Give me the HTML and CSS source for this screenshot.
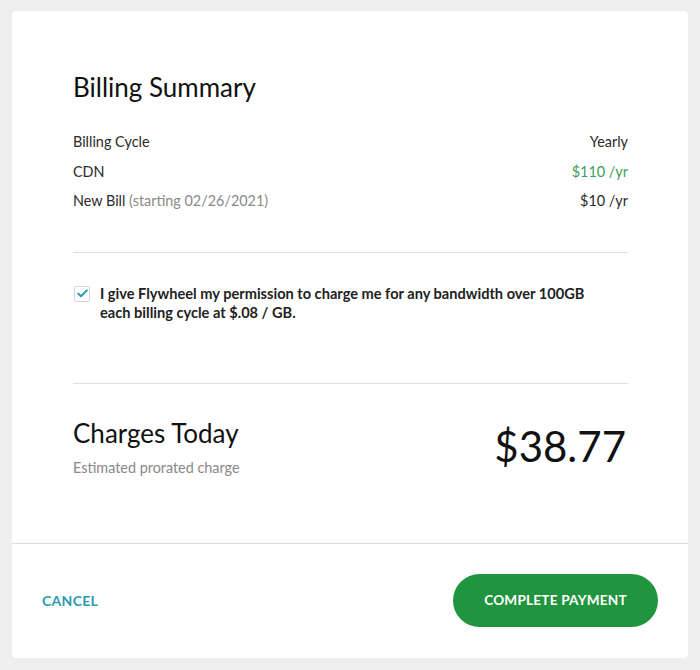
FILE: index.html
```html
<!DOCTYPE html>
<html lang="en">
<head>
<meta charset="utf-8">
<title>Billing Summary</title>
<link rel="stylesheet" href="styles.css">
</head>
<body>
<div class="card">
  <div class="content">
    <h1 class="title">Billing Summary</h1>
    <div class="rows">
      <div class="row"><span>Billing Cycle</span><span>Yearly</span></div>
      <div class="row"><span>CDN</span><span class="green">$110 /yr</span></div>
      <div class="row"><span>New Bill <span class="muted">(starting 02/26/2021)</span></span><span>$10 /yr</span></div>
    </div>
    <hr class="divider">
    <label class="consent">
      <span class="box"><svg width="11" height="9" viewBox="0 0 11 9"><path d="M1.2 4.6 L4 7.3 L9.8 1.4" fill="none" stroke="#2a9cb0" stroke-width="2" stroke-linecap="round" stroke-linejoin="round"/></svg></span>
      <span class="consent-text">I give Flywheel my permission to charge me for any bandwidth over 100GB each billing cycle at $.08 / GB.</span>
    </label>
    <hr class="divider divider-2">
    <div class="charges">
      <div>
        <h2 class="title">Charges Today</h2>
        <div class="sub">Estimated prorated charge</div>
      </div>
      <div class="amount">$38.77</div>
    </div>
  </div>
  <div class="footer">
    <a class="cancel" href="#">CANCEL</a>
    <button class="pay">COMPLETE PAYMENT</button>
  </div>
</div>
</body>
</html>
```
FILE: styles.css
```css
* { box-sizing: border-box; }
html, body { margin: 0; }
body {
  background: #efeeee;
  padding: 11px 12px 12px 12px;
  font-family: Lato, "Open Sans", sans-serif;
  color: #1b1b1b;
}
.card {
  background: #fff;
  border-radius: 4px;
  width: 676px;
  height: 647px;
  display: flex;
  flex-direction: column;
}
.content {
  flex: 1;
  padding: 62px 60px 0 61px;
}
.title {
  margin: 0;
  font-size: 26px;
  font-weight: 400;
  line-height: 29px;
  color: #111;
}
.rows { margin-top: 25px; }
.row {
  display: flex;
  justify-content: space-between;
  font-size: 14.4px;
  line-height: 29.5px;
  color: #2b2b2b;
}
.green { color: #3c9f5c; }
.muted { color: #8a8a8a; }
.divider {
  border: 0;
  border-top: 1px solid #dedede;
  margin: 36px 0 0 0;
}
.consent {
  display: flex;
  align-items: flex-start;
  gap: 10px;
  margin-top: 31px;
  padding-left: 1px;
}
.box {
  flex: none;
  width: 16px;
  height: 16px;
  border: 1px solid #d6d6d6;
  border-radius: 2px;
  display: flex;
  align-items: center;
  justify-content: center;
  margin-top: 2px;
}
.consent-text {
  font-size: 14.6px;
  font-weight: 700;
  line-height: 19px;
  color: #222;
  max-width: 495px;
}
.divider-2 { margin-top: 61px; }
.charges {
  display: flex;
  justify-content: space-between;
  align-items: flex-start;
  margin-top: 35px;
}
.sub {
  margin-top: 11px;
  font-size: 14.4px;
  line-height: 18px;
  color: #888;
}
.amount {
  font-size: 42px;
  line-height: 50px;
  margin-top: 2px;
  color: #111;
  margin-right: 2px;
}
.footer {
  height: 115px;
  border-top: 1px solid #dcdcdc;
  display: flex;
  align-items: center;
  justify-content: space-between;
  padding: 0 30px 2px 30px;
}
.cancel {
  color: #2a9cb0;
  font-size: 14px;
  font-weight: 700;
  letter-spacing: 0.3px;
  text-decoration: none;
}
.pay {
  width: 205px;
  height: 53px;
  border: 0;
  border-radius: 27px;
  background: #21943f;
  color: #fff;
  font-family: inherit;
  font-size: 13.6px;
  font-weight: 700;
  letter-spacing: 0.2px;
  cursor: pointer;
}
```
